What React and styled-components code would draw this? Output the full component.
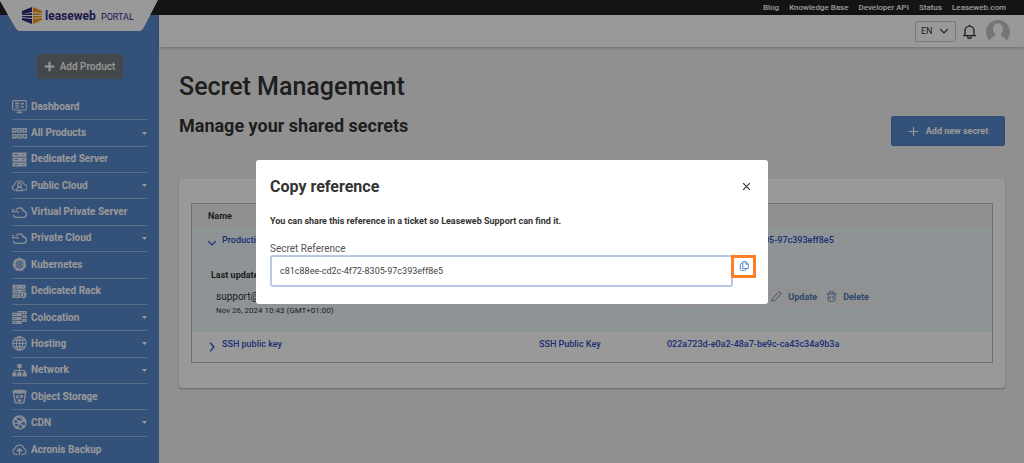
import React, { useState } from 'react';
import styled, { createGlobalStyle } from 'styled-components';

const GlobalStyle = createGlobalStyle`
  * {
    box-sizing: border-box;
  }

  body {
    margin: 0;
    background-color: #f1f1f1;
    color: #333;
    font-family: Roboto, 'Liberation Sans', sans-serif;
    font-size: 10px;
    line-height: 14px;
  }

  button,
  input,
  select {
    font: inherit;
    color: inherit;
  }

  a {
    color: inherit;
    text-decoration: none;
  }

  h1,
  h2,
  p,
  ul {
    margin: 0;
    padding: 0;
  }

  svg {
    display: block;
    flex: none;
  }
`;

const StyledPage = styled.div`
  display: grid;
  grid-template-columns: 159px 1fr;
  min-height: 100vh;
`;

const StyledSidebar = styled.aside`
  display: flex;
  flex-direction: column;
  background-color: #5887cb;
  color: #fff;
`;

const StyledLogo = styled.a`
  display: block;
  height: 32px;
  background-color: #222;

  svg {
    width: 100%;
    height: 32px;
  }
`;

const AddProduct = styled.button`
  display: flex;
  align-items: center;
  justify-content: center;
  gap: 5px;
  width: 86px;
  height: 25px;
  margin: 22px auto 15px;
  padding: 0;
  border: 0;
  border-radius: 3px;
  background-color: #72797e;
  color: #fff;
  font-weight: 500;
`;

const StyledNav = styled.ul`
  flex: 1;
  display: grid;
  grid-auto-rows: 1fr;
  padding: 0 12px;
  list-style: none;

  li {
    display: grid;
    border-bottom: 1px solid rgba(255, 255, 255, 0.4);

    &:last-child {
      border-bottom: 0;
    }
  }

  a {
    display: flex;
    align-items: center;
    gap: 4px;
    font-weight: 700;
    white-space: nowrap;
  }

  .icon {
    opacity: 0.85;
  }

  .caret {
    margin-left: auto;
  }
`;

const StyledTopBar = styled.nav`
  display: flex;
  justify-content: flex-end;
  gap: 10px;
  height: 15px;
  padding-right: 18px;
  background-color: #222;
  color: #fff;
  font-size: 8px;
  font-weight: 500;
  line-height: 15px;
`;

const StyledHeader = styled.header`
  display: flex;
  align-items: center;
  justify-content: flex-end;
  height: 32px;
  padding-right: 14px;
  background-color: #fff;
  box-shadow: 0 1px 3px rgba(0, 0, 0, 0.25);

  .bell {
    margin: 0 9px 0 6px;
  }
`;

const Language = styled.label`
  display: grid;
  align-items: center;
  width: 41px;
  height: 21px;
  border: 1px solid #ccc;
  border-radius: 2px;

  select,
  svg {
    grid-area: 1 / 1;
  }

  select {
    width: 100%;
    padding: 0 0 0 5px;
    border: 0;
    background: none;
    appearance: none;
    font-size: 9px;
  }

  svg {
    justify-self: end;
    margin-right: 6px;
    pointer-events: none;
  }
`;

const IconButton = styled.button`
  display: grid;
  place-items: center;
  padding: 0;
  border: 0;
  background: none;
`;

const StyledMain = styled.main`
  padding: 24px 19px 24px 20px;

  h1 {
    font-size: 25px;
    font-weight: 500;
    line-height: 32px;
  }
`;

const TitleRow = styled.div`
  display: flex;
  justify-content: space-between;
  margin: 13px 0 33px;

  h2 {
    font-size: 18px;
    font-weight: 700;
    line-height: 20px;
  }
`;

const AddSecret = styled.button`
  display: flex;
  align-items: center;
  justify-content: center;
  gap: 7px;
  width: 114px;
  height: 30px;
  padding: 0;
  border: 1px solid #4f7dc0;
  border-radius: 2px;
  background-color: #5887cb;
  color: #fff;
  font-size: 9px;
  font-weight: 700;
`;

const Card = styled.section`
  padding: 24px 12px 25px;
  border-radius: 3px;
  background-color: #fff;
  box-shadow: 0 1px 2px rgba(0, 0, 0, 0.3);
`;

const StyledTable = styled.table`
  width: 100%;
  border: 1px solid #bbb;
  border-spacing: 0;
  table-layout: fixed;

  th,
  td {
    padding: 0 7px;
    text-align: left;
    vertical-align: top;
  }

  th {
    height: 24px;
    background-color: #f1f1f1;
    font-size: 9px;
    vertical-align: middle;
  }

  th:first-child {
    width: 42.5%;
    padding-left: 16px;
  }

  th:nth-child(2) {
    width: 16%;
  }
`;

const SecretRow = styled.tr`
  height: ${({ $open }) => ($open ? 34 : 30)}px;
  background-color: ${({ $open }) => ($open ? '#edf5fa' : '#fff')};
  color: #2f4fc4;
  font-size: 9px;
  font-weight: 500;

  td {
    padding-top: 5px;
  }

  td:first-child {
    padding-left: 15px;
  }

  button {
    display: flex;
    gap: 5px;
    padding: 0;
    border: 0;
    background: none;
  }

  svg {
    margin-top: 5px;
  }
`;

const DetailRow = styled.tr`
  height: 70px;
  background-color: #edf5fa;

  td:first-child {
    padding: 6px 0 0 19px;
  }

  td:last-child {
    padding: 24px 0 0;
  }

  p {
    padding-left: 5px;
    font-size: 8px;
  }

  p:first-child {
    padding: 0;
    margin-bottom: 8px;
    font-size: 9px;
    font-weight: 700;
  }

  p:nth-child(2) {
    font-size: 10px;
  }
`;

const Actions = styled.div`
  display: flex;
  gap: 3px;

  button {
    display: flex;
    align-items: center;
    gap: 6px;
    height: 21px;
    padding: 0 3px;
    border: 0;
    border-radius: 2px;
    background-color: #f2f2f2;
    color: #4f78b8;
    font-size: 9px;
    font-weight: 700;
    white-space: nowrap;
  }
`;

const Backdrop = styled.div`
  position: fixed;
  inset: 0;
  display: grid;
  place-items: center;
  background-color: rgba(0, 0, 0, 0.4);
`;

const Modal = styled.section`
  width: 50%;
  min-width: 320px;
  padding: 17px 12px 17px 14px;
  border-radius: 3px;
  background-color: #fff;

  header {
    display: flex;
    align-items: center;
    justify-content: space-between;
    padding-right: 5px;
  }

  h2 {
    font-size: 16px;
    line-height: 20px;
  }

  p {
    margin: 17px 0 15px;
    font-size: 9px;
    font-weight: 700;
  }

  label {
    display: block;
    color: #555;
    line-height: 12px;
  }
`;

const ReferenceField = styled.div`
  display: flex;
  align-items: flex-start;

  input {
    flex: 1;
    min-width: 0;
    height: 32px;
    padding: 0 8px;
    border: 2px solid #b9c8e3;
    border-radius: 3px;
    outline: 0;
    color: #444;
    font-size: 9px;
  }
`;

const CopyButton = styled(IconButton)`
  width: 25px;
  height: 23px;
  margin-left: -2px;
  border: 3px solid #ff7f27;
  background-color: #fff;
  color: #5887cb;
  z-index: 1;
`;

const icons = {
  dashboard: (
    <>
      <rect x="0.7" y="1.7" width="14.6" height="10" rx="1" />
      <path d="M3.5 4.6h3.7M3.5 6.8h3.7M3.5 9h3.7M9 5h3.7M9 8.4h3.7" strokeWidth="1.5" />
      <path d="M8 12v2M5 14.4h6" strokeWidth="1.6" />
    </>
  ),
  grid: (
    <path
      d="M.8 3h3.4v3.4H.8zM6.3 3h3.4v3.4H6.300zM11.800 3h3.400v3.400h-3.400zM.8 9.200h3.400v3.400H.8zM6.300 9.200h3.400v3.400H6.300zM11.800 9.200h3.400v3.400h-3.400z"
      strokeWidth="1.5"
    />
  ),
  server: (
    <>
      <path d="M.5.5h15v4.5H.5zM.5 5.8h15v4.500H.5zM.5 11.100h15v4.400H.5z" fill="currentColor" stroke="none" />
      <path d="M2.500 2.800h4M2.500 8h4M2.500 13.300h4M11.500 2.800h1.500M11.500 8h1.500M11.500 13.300h1.500" stroke="#5887cb" strokeWidth="0.8" />
    </>
  ),
  publicCloud: (
    <>
      <path d="M4 13H3.4A2.8 2.8 0 0 1 2.6 7.5 5.5 5.5 0 0 1 13.2 7a3 3 0 0 1-.4 6H12" />
      <circle cx="8" cy="7.2" r="2" />
      <path d="M4.8 13.4c.2-2.6 1.4-3.6 3.2-3.6s3 1 3.2 3.6z" />
    </>
  ),
  cloud: (
    <>
      <path d="M4.400 5.400a4.200 4.200 0 0 1 7.800 1 3.400 3.400 0 0 1 .6 6.700H4.400A2.800 2.800 0 0 1 1.600 10.400" strokeWidth="1.4" />
      <path d="M.5 4.800h2.200M.5 7h5c1 0 1.500.6 1.500 1.500M.5 5v3" />
    </>
  ),
  kubernetes: (
    <>
      <path d="M8 .5l5.800 2.800 1.500 6.300-4 5H4.700l-4-5 1.500-6.300z" fill="currentColor" stroke="none" />
      <g stroke="#5887cb" strokeWidth="0.9">
        <circle cx="8" cy="8" r="3.4" />
        <path d="M8 3v10M3.400 6l9.200 4M3.400 10l9.200-4M5 12l6-8M5 4l6 8" strokeWidth="0.6" />
      </g>
    </>
  ),
  rack: (
    <>
      <path
        d="M.5.8h14v4.200H.5zM.5 5.800h14v2L11 7.200 9 10H.5zM.5 10.800h8c0 1.800.4 3 1.200 4.200H.5zM12.300 8l3.200 1.200v2.400c0 2-1.300 3.200-3.200 4-1.900-.8-3-2-3-4V9.200z"
        fill="currentColor"
        stroke="none"
      />
      <path d="M2.500 2.900h4M2.500 8h4M2.500 13h4M11 2.900h1.500M12.300 9.800v4" stroke="#5887cb" strokeWidth="0.8" />
    </>
  ),
  colocation: (
    <>
      <path
        d="M.3 3h10v3.500H.3zM.3 7.200h10v3.500H.3zM.3 11.400h10v3.500H.3zM6 1h9.700v3.300h-4.600V2.300H6zM11.100 5.100h4.600v3.400h-4.600zM11.100 9.300h4.600v3.400h-4.600z"
        fill="currentColor"
        stroke="none"
      />
      <path d="M1.800 4.800h3M1.800 9h3M1.800 13.200h3M12.700 2.800h1.500M12.700 6.900h1.500M12.700 11h1.500" stroke="#5887cb" strokeWidth="0.8" />
    </>
  ),
  globe: (
    <>
      <circle cx="8" cy="8" r="7.2" />
      <ellipse cx="8" cy="8" rx="3.4" ry="7.2" />
      <path d="M8 .8v14.4M.8 8h14.4M2 4.400h12M2 11.600h12" />
    </>
  ),
  network: (
    <>
      <path d="M8 5v6M2.500 11V8h11v3" />
      <path
        d="M5.800 1h4.400v4.400H5.800zM.3 10.200h4.400v4.200H.3zM5.800 10.200h4.400v4.200H5.800zM11.300 10.200h4.400v4.200h-4.400z"
        fill="currentColor"
        stroke="none"
      />
    </>
  ),
  bucket: (
    <>
      <path d="M1.600 3.500l1.800 11q4.600 1.200 9.200 0l1.800-11" strokeWidth="1.5" />
      <ellipse cx="8" cy="2.700" rx="7" ry="1.700" fill="currentColor" />
      <path d="M4.300 7h3v2.800h-3zM8.700 6.500h3v2.800h-3zM6 10.800h4v2.800H6z" fill="currentColor" stroke="none" />
    </>
  ),
  cdn: (
    <>
      <circle cx="8" cy="8" r="6.9" strokeWidth="1.5" />
      <path d="M8 8L3 3.500M8 8l6-2M8 8l-1.500 6.500M8 8l4 4.400M8 8l-6.500 2M5 1.800l6.800 2.400 2.600 4.600M3 12.800L2 6" />
      <g fill="currentColor" stroke="none">
        <circle cx="8" cy="8" r="2.3" />
        <circle cx="3.6" cy="4" r="1.8" />
        <circle cx="12" cy="4.6" r="1.7" />
        <circle cx="12.2" cy="12.2" r="1.8" />
        <circle cx="5" cy="13" r="1.6" />
      </g>
    </>
  ),
  backup: (
    <>
      <path d="M5.500 13.200H3.800a3.200 3.200 0 0 1-.6-6.200 5 5 0 0 1 9.600 0 3.200 3.200 0 0 1-.6 6.200h-1.700" />
      <path d="M8 14V7.500M5.300 10L8 7.200l2.700 2.800" strokeWidth="1.6" />
    </>
  ),
  bell: <path d="M1 12.400h14M3.200 12V7a4.800 4.800 0 0 1 9.600 0v5M8 2.400V.8M6 13.200a2 2 0 0 0 4 0" />,
  plus: <path d="M8 1v14M1 8h14" />,
  close: <path d="M2 2l12 12M14 2L2 14" />,
  down: <path d="M2 5l6 6 6-6" />,
  right: <path d="M5 1l6 7-6 7" />,
  eye: (
    <>
      <path d="M1 8c4-5 10-5 14 0-4 5-10 5-14 0z" />
      <circle cx="8" cy="8" r="2" />
    </>
  ),
  copy: (
    <>
      <path d="M6 1h5l4 4v7H6zM11 1v4h4" />
      <path d="M6 4H4a2 2 0 0 0-2 2v7a2 2 0 0 0 2 2h5a2 2 0 0 0 2-2v-1" />
    </>
  ),
  pencil: <path d="M1 15l1-4 9-9a2 2 0 0 1 3 3l-9 9z" />,
  trash: <path d="M1 4h14M5 4V1h6v3M3 4v9a2 2 0 0 0 2 2h6a2 2 0 0 0 2-2V4M6 7v5M10 7v5" />,
};

const Icon = ({ name, size = 15, stroke = 1.2, className }) => (
  <svg
    className={className}
    width={size}
    height={size}
    viewBox="0 0 16 16"
    fill="none"
    stroke="currentColor"
    strokeWidth={stroke}
    aria-hidden="true">
    {icons[name]}
  </svg>
);

const Logo = () => (
  <StyledLogo href="#" aria-label="Leaseweb Portal">
    <svg viewBox="0 0 159 32" preserveAspectRatio="none">
      <path d="M0 15h159v17H0z" fill="#5887cb" />
      <path d="M0 0h158l-14 27q-2 4-5 4H20q-3 0-5-4L0 1z" fill="#fff" />
      <g fill="#2d2b7f">
        <path d="M32 7v5l-10 2v-3z" />
        <path d="M32 13v2H22v-1z" />
        <path d="M32 16v2l-10-1v-1z" />
        <path d="M32 19v5l-10-4v-2z" />
      </g>
      <g fill="#f59a1b">
        <path d="M33 7l9 4v2l-9-1z" />
        <path d="M33 13l9 1v1h-9z" />
        <path d="M33 16h9v1l-9 1z" />
        <path d="M33 19l9-1v2l-9 4z" />
      </g>
      <text x="45" y="20" fill="#2d2b7f" fontSize="12" fontWeight="700">
        leaseweb
      </text>
      <text x="101" y="20" fill="#2d2b7f" fontSize="9">
        PORTAL
      </text>
    </svg>
  </StyledLogo>
);

const navItems = [
  { label: 'Dashboard', icon: 'dashboard' },
  { label: 'All Products', icon: 'grid', menu: true },
  { label: 'Dedicated Server', icon: 'server' },
  { label: 'Public Cloud', icon: 'publicCloud', menu: true },
  { label: 'Virtual Private Server', icon: 'cloud' },
  { label: 'Private Cloud', icon: 'cloud', menu: true },
  { label: 'Kubernetes', icon: 'kubernetes' },
  { label: 'Dedicated Rack', icon: 'rack' },
  { label: 'Colocation', icon: 'colocation', menu: true },
  { label: 'Hosting', icon: 'globe', menu: true },
  { label: 'Network', icon: 'network', menu: true },
  { label: 'Object Storage', icon: 'bucket' },
  { label: 'CDN', icon: 'cdn', menu: true },
  { label: 'Acronis Backup', icon: 'backup' },
];

const topLinks = ['Blog', 'Knowledge Base', 'Developer API', 'Status', 'Leaseweb.com'];

const reference = 'c81c88ee-cd2c-4f72-8305-97c393eff8e5';

const Sidebar = () => (
  <StyledSidebar>
    <Logo />
    <AddProduct type="button">
      <Icon name="plus" size={11} stroke={3} />
      Add Product
    </AddProduct>
    <StyledNav>
      {navItems.map(({ label, icon, menu }) => (
        <li key={label}>
          <a href="#">
            <Icon name={icon} className="icon" />
            {label}
            {menu && (
              <svg className="caret" width="5" height="3" viewBox="0 0 5 3">
                <path d="M0 0h5L2.500 3z" fill="currentColor" />
              </svg>
            )}
          </a>
        </li>
      ))}
    </StyledNav>
  </StyledSidebar>
);

const Header = () => (
  <>
    <StyledTopBar>
      {topLinks.map(link => (
        <a href="#" key={link}>
          {link}
        </a>
      ))}
    </StyledTopBar>
    <StyledHeader>
      <Language>
        <select aria-label="Language" defaultValue="EN">
          <option>EN</option>
          <option>NL</option>
        </select>
        <Icon name="down" size={10} stroke={2} />
      </Language>
      <IconButton type="button" className="bell" aria-label="Notifications">
        <Icon name="bell" stroke={1.4} />
      </IconButton>
      <IconButton type="button" aria-label="Account">
        <svg width="24" height="22" viewBox="0 0 24 22">
          <path
            d="M4 21A12 12 0 1 1 20 21C20 18 17 17 15 16v-2a5 6 0 1 0-6 0v2C7 17 4 18 4 21z"
            fill="#c4c4c4"
          />
        </svg>
      </IconButton>
    </StyledHeader>
  </>
);

const Secrets = () => (
  <Card>
    <StyledTable>
      <thead>
        <tr>
          <th>Name</th>
          <th aria-label="Type" />
          <th aria-label="Reference" />
        </tr>
      </thead>
      <tbody>
        <SecretRow $open>
          <td>
            <button type="button" aria-expanded="true">
              <Icon name="down" size={10} stroke={2.2} />
              Production
            </button>
          </td>
          <td>Password</td>
          <td>{reference}</td>
        </SecretRow>
        <DetailRow>
          <td colSpan={2}>
            <p>Last updated</p>
            <p>support@</p>
            <p>Nov 26, 2024 10:43 (GMT+01:00)</p>
          </td>
          <td>
            <Actions>
              <button type="button">
                <Icon name="eye" size={11} />
                Show
              </button>
              <button type="button">
                <Icon name="copy" size={11} />
                Copy ref
              </button>
              <button type="button">
                <Icon name="pencil" size={11} />
                Update
              </button>
              <button type="button">
                <Icon name="trash" size={11} />
                Delete
              </button>
            </Actions>
          </td>
        </DetailRow>
        <SecretRow>
          <td>
            <button type="button" aria-expanded="false">
              <Icon name="right" size={10} stroke={2.2} />
              SSH public key
            </button>
          </td>
          <td>SSH Public Key</td>
          <td>022a723d-e0a2-48a7-be9c-ca43c34a9b3a</td>
        </SecretRow>
      </tbody>
    </StyledTable>
  </Card>
);

const CopyReference = ({ onClose }) => (
  <Backdrop>
    <Modal role="dialog" aria-modal="true" aria-labelledby="copy-title">
      <header>
        <h2 id="copy-title">Copy reference</h2>
        <IconButton type="button" aria-label="Close" onClick={onClose}>
          <Icon name="close" size={9} stroke={2} />
        </IconButton>
      </header>
      <p>You can share this reference in a ticket so Leaseweb Support can find it.</p>
      <label htmlFor="reference">Secret Reference</label>
      <ReferenceField>
        <input id="reference" type="text" value={reference} readOnly />
        <CopyButton
          type="button"
          aria-label="Copy"
          onClick={() => navigator.clipboard.writeText(reference)}>
          <Icon name="copy" size={10} stroke={1.6} />
        </CopyButton>
      </ReferenceField>
    </Modal>
  </Backdrop>
);

const App = () => {
  const [open, setOpen] = useState(true);

  return (
    <>
      <GlobalStyle />
      <StyledPage>
        <Sidebar />
        <div>
          <Header />
          <StyledMain>
            <h1>Secret Management</h1>
            <TitleRow>
              <h2>Manage your shared secrets</h2>
              <AddSecret type="button">
                <Icon name="plus" size={11} stroke={1.6} />
                Add new secret
              </AddSecret>
            </TitleRow>
            <Secrets />
          </StyledMain>
        </div>
      </StyledPage>
      {open && <CopyReference onClose={() => setOpen(false)} />}
    </>
  );
};

export default App;
